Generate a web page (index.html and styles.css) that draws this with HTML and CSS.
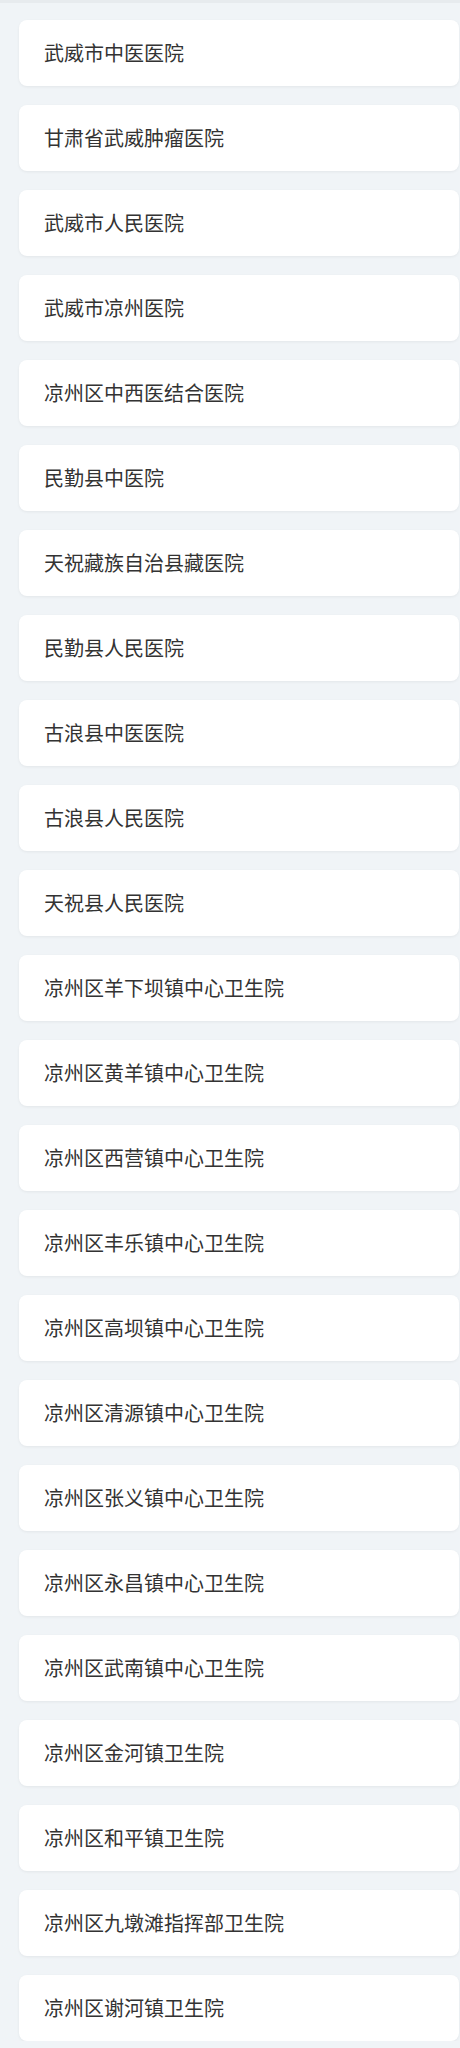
FILE: index.html
```html
<!DOCTYPE html>
<html lang="zh-CN">
<head>
<meta charset="utf-8">
<title>医院列表</title>
<link rel="stylesheet" href="styles.css">
</head>
<body>
<div class="topbar"></div>
<ul class="list">
<li class="card">武威市中医医院</li>
<li class="card">甘肃省武威肿瘤医院</li>
<li class="card">武威市人民医院</li>
<li class="card">武威市凉州医院</li>
<li class="card">凉州区中西医结合医院</li>
<li class="card">民勤县中医院</li>
<li class="card">天祝藏族自治县藏医院</li>
<li class="card">民勤县人民医院</li>
<li class="card">古浪县中医医院</li>
<li class="card">古浪县人民医院</li>
<li class="card">天祝县人民医院</li>
<li class="card">凉州区羊下坝镇中心卫生院</li>
<li class="card">凉州区黄羊镇中心卫生院</li>
<li class="card">凉州区西营镇中心卫生院</li>
<li class="card">凉州区丰乐镇中心卫生院</li>
<li class="card">凉州区高坝镇中心卫生院</li>
<li class="card">凉州区清源镇中心卫生院</li>
<li class="card">凉州区张义镇中心卫生院</li>
<li class="card">凉州区永昌镇中心卫生院</li>
<li class="card">凉州区武南镇中心卫生院</li>
<li class="card">凉州区金河镇卫生院</li>
<li class="card">凉州区和平镇卫生院</li>
<li class="card">凉州区九墩滩指挥部卫生院</li>
<li class="card">凉州区谢河镇卫生院</li>
</ul>
</body>
</html>
```
FILE: styles.css
```css
html, body {
  margin: 0;
  padding: 0;
  background: #f0f4f7;
}
body {
  font-family: "Noto Sans CJK SC", "Noto Sans", sans-serif;
  color: #333333;
}
.topbar {
  height: 3px;
  background: #e7ebee;
}
.list {
  list-style: none;
  margin: 0;
  padding: 17px 1px 0 19px;
  display: flex;
  flex-direction: column;
  gap: 19px;
}
.card {
  height: 66px;
  box-sizing: border-box;
  display: flex;
  align-items: center;
  padding-left: 25px;
  background: #ffffff;
  border-radius: 8px;
  box-shadow: 0 1px 3px rgba(0, 0, 0, 0.06);
  font-size: 20px;
  font-weight: 400;
  line-height: 1;
}
```
